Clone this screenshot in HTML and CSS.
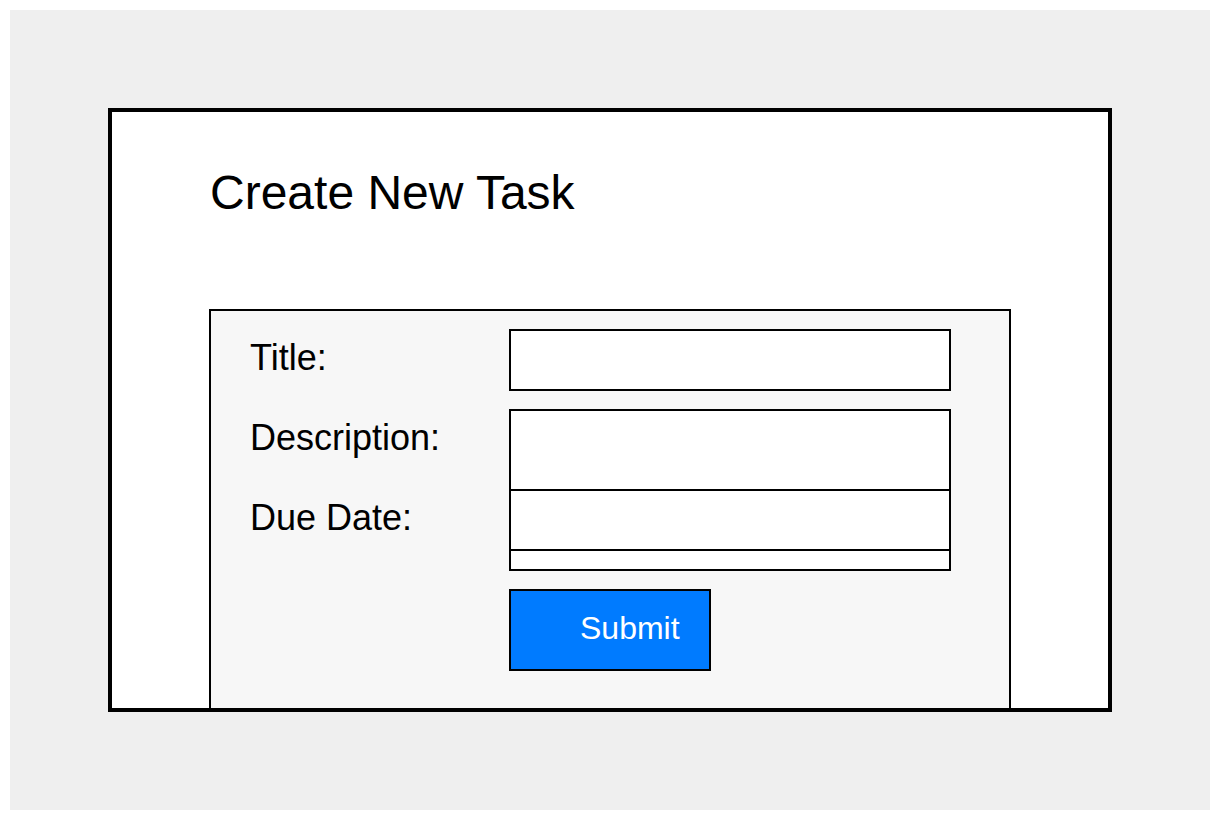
FILE: index.html
```html
<!DOCTYPE html>
<html lang="en">
<head>
<meta charset="utf-8">
<title>Create New Task</title>
<link rel="stylesheet" href="styles.css">
</head>
<body>
<div class="page">
  <div class="card">
    <h1 class="heading">Create New Task</h1>
    <form class="task-form">
      <div class="row">
        <label class="label" for="title">Title:</label>
        <input class="field field-title" id="title" type="text">
      </div>
      <div class="row row-desc">
        <label class="label" for="desc">Description:</label>
        <textarea class="field field-desc" id="desc"></textarea>
      </div>
      <div class="row row-due">
        <label class="label" for="due">Due Date:</label>
        <input class="field field-due" id="due" type="text">
      </div>
      <div class="row row-extra">
        <span class="label-spacer"></span>
        <div class="field field-extra"></div>
      </div>
      <div class="row row-submit">
        <span class="label-spacer"></span>
        <button class="submit" type="button">Submit</button>
      </div>
    </form>
  </div>
</div>
</body>
</html>
```

FILE: styles.css
```css
html, body {
  margin: 0;
  padding: 0;
  background: #ffffff;
}

body {
  padding: 10px;
  font-family: "Liberation Sans", Arial, sans-serif;
  color: #000000;
}

.page {
  width: 1200px;
  height: 800px;
  box-sizing: border-box;
  background: #efefef;
  padding: 98px;
}

.card {
  width: 1004px;
  height: 604px;
  box-sizing: border-box;
  border: 4px solid #000000;
  background: #ffffff;
  padding: 57px 0 0 98px;
}

.heading {
  margin: 0;
  font-size: 48px;
  line-height: 48px;
  font-weight: normal;
}

.task-form {
  margin: 92px 0 0 -1px;
  width: 802px;
  height: 401px;
  box-sizing: border-box;
  border: 2px solid #000000;
  background: #f7f7f7;
  padding: 18px 0 0 39px;
  display: flex;
  flex-direction: column;
}

.row {
  display: flex;
  align-items: flex-start;
}

.label,
.label-spacer {
  width: 259px;
  flex: 0 0 259px;
  font-size: 36px;
  line-height: 36px;
  padding-top: 11px;
}

.label-spacer {
  padding-top: 0;
}

.field {
  display: block;
  margin: 0;
  padding: 0;
  width: 442px;
  box-sizing: border-box;
  border: 2px solid #000000;
  background: #ffffff;
  border-radius: 0;
  outline: none;
  font: inherit;
  resize: none;
}

.field-title { height: 62px; }

.row-desc { margin-top: 18px; }
.field-desc { height: 82px; }

.row-due { margin-top: -2px; }
.field-due { height: 62px; }

.row-extra { margin-top: -2px; }
.field-extra { height: 22px; }

.row-submit { margin-top: 18px; }

.submit {
  width: 202px;
  height: 82px;
  box-sizing: border-box;
  margin: 0;
  border: 2px solid #000000;
  border-radius: 0;
  background: #007bff;
  color: #ffffff;
  font-family: "Liberation Sans", Arial, sans-serif;
  font-size: 32px;
  line-height: 32px;
  text-align: left;
  padding: 0 0 5px 69px;
}
```
